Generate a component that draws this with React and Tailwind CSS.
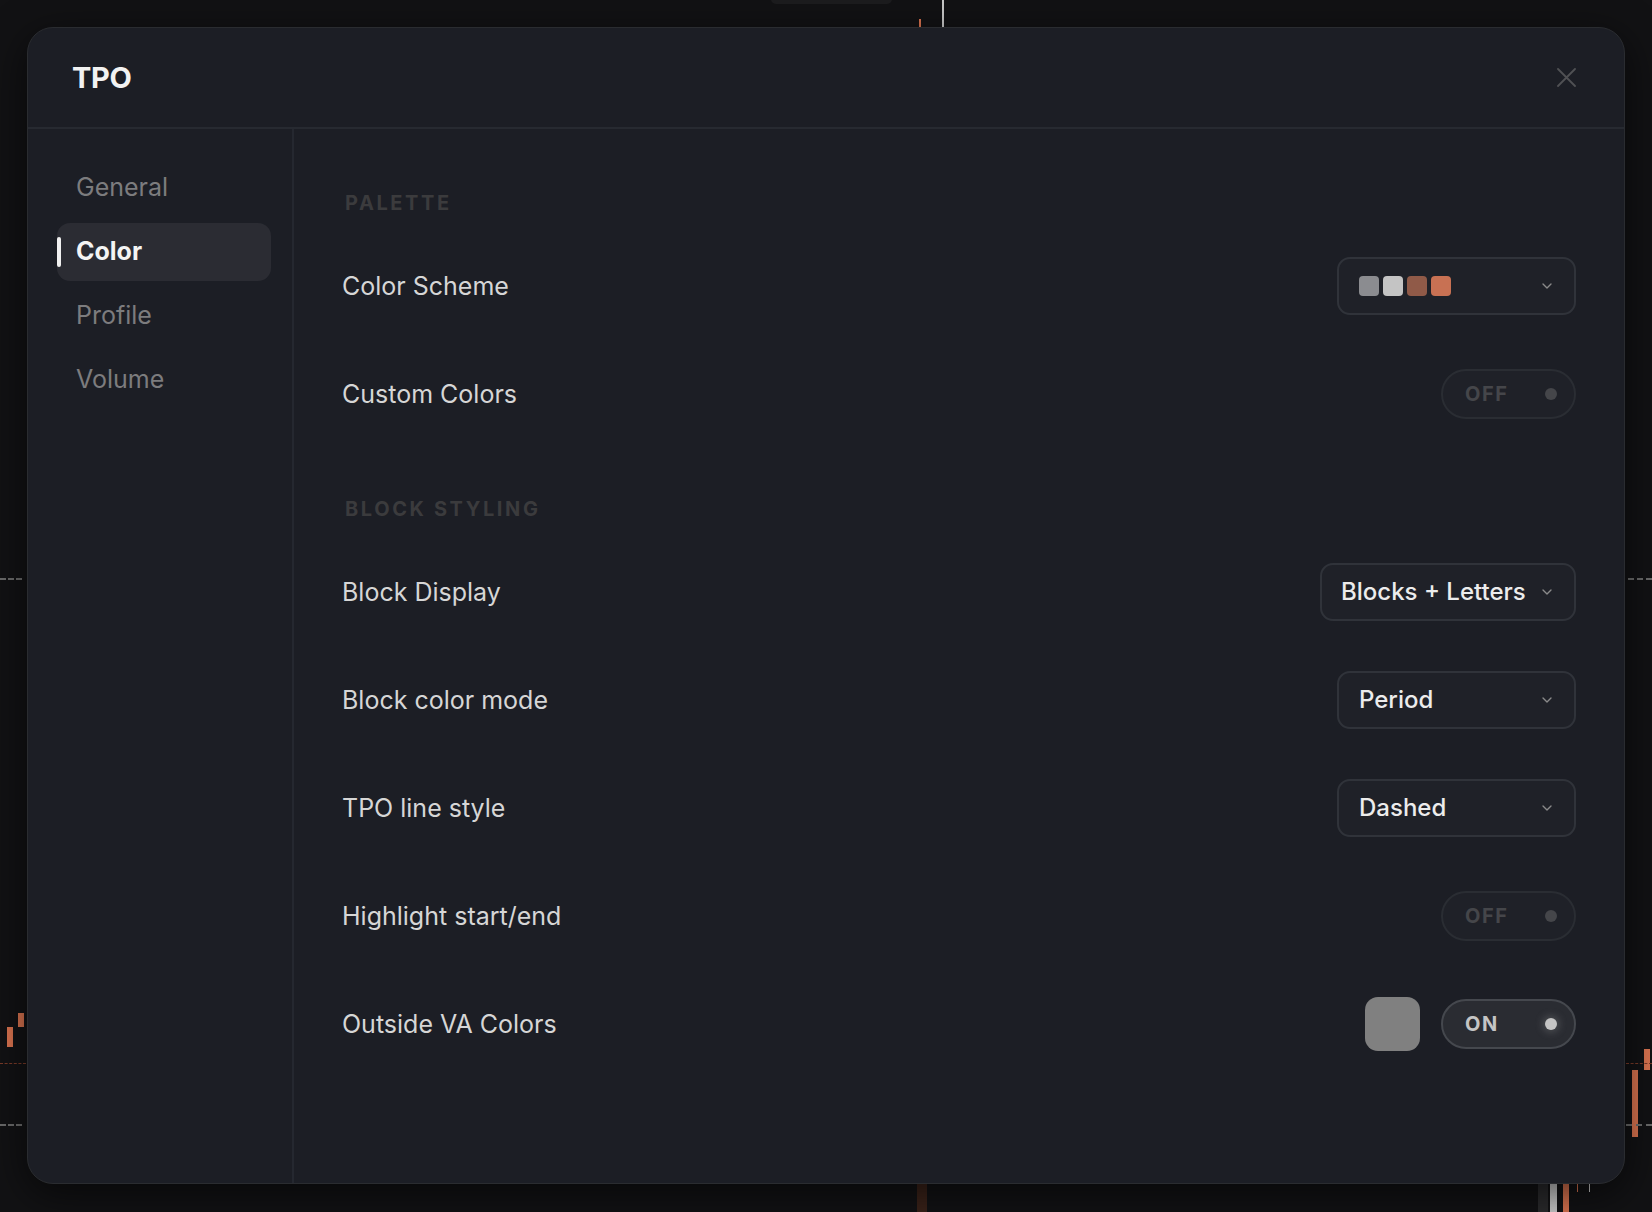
import { ChevronDown } from 'lucide-react';

const navItems = ['General', 'Color', 'Profile', 'Volume'];

function Select({ children, wide }) {
    return (
        <div className={`flex items-center justify-between h-[58px] rounded-[13px] border-2 border-[#30333a] bg-[#1f2128] pr-[19px] ${wide ? 'w-[256px] pl-[19px]' : 'w-[239px] pl-[20px]'}`}>
            <div className="flex items-center text-[24px] font-medium text-[#ececec] leading-none">{children}</div>
            <ChevronDown size={16} strokeWidth={2} className="text-[#8a8a8a]" />
        </div>
    );
}

function Toggle({ on }) {
    return (
        <div className={`flex items-center justify-between w-[135px] h-[50px] rounded-full border-2 pl-[22px] pr-[17px] ${on ? 'border-[#45484e] bg-[#2a2c32]' : 'border-[#2a2d33] bg-[#1f2128]'}`}>
            <span className={`text-[20px] font-bold tracking-[0.08em] leading-none ${on ? 'text-[#c4c4c4]' : 'text-[#45464a]'}`}>{on ? 'ON' : 'OFF'}</span>
            <span className={`w-[12px] h-[12px] rounded-full ${on ? 'bg-[#c4c4c4] shadow-[0_0_8px_2px_rgba(196,196,196,0.25)]' : 'bg-[#45464a]'}`} />
        </div>
    );
}

function Row({ label, children }) {
    return (
        <div className="flex items-center justify-between h-[108px]">
            <span className="text-[25px] text-[#d6d6d6] leading-none">{label}</span>
            <div className="flex items-center gap-[21px]">{children}</div>
        </div>
    );
}

function Section({ title, children }) {
    return (
        <div className="flex flex-col">
            <h3 className="ml-[3px] h-[28px] flex items-center text-[20px] font-bold tracking-[0.13em] text-[#3b3b3d] mb-[15px]">{title}</h3>
            {children}
        </div>
    );
}

export default function App() {
    return (
        <div className="relative w-[1652px] h-[1212px] bg-[#121214] overflow-hidden" style={{ fontFamily: 'Inter, "Noto Sans", sans-serif' }}>
            {/* chart remnants behind the dialog */}
            <div className="absolute left-[771px] top-[-6px] w-[121px] h-[10px] rounded-md bg-[#1c1c1e]" />
            <div className="absolute left-[919px] top-[19px] w-[2px] h-[8px] bg-[#d9734f]" />
            <div className="absolute left-[942px] top-0 w-[2px] h-[27px] bg-[#c8c8c8]" />
            <div className="absolute left-0 top-[578px] w-[22px] border-t-2 border-dashed border-[#6a6a6a]" />
            <div className="absolute left-[1628px] top-[578px] w-[24px] border-t-2 border-dashed border-[#6a6a6a]" />
            <div className="absolute left-[7px] top-[1027px] w-[6px] h-[20px] bg-[#d9734f]" />
            <div className="absolute left-[18px] top-[1013px] w-[6px] h-[14px] bg-[#d9734f]" />
            <div className="absolute left-0 top-[1063px] w-[26px] border-t border-dashed border-[#7a3a28]" />
            <div className="absolute left-0 top-[1124px] w-[22px] border-t-2 border-dashed border-[#6a6a6a]" />
            <div className="absolute left-[1644px] top-[1049px] w-[6px] h-[21px] bg-[#d9734f]" />
            <div className="absolute left-[1632px] top-[1070px] w-[6px] h-[67px] bg-[#d9734f]" />
            <div className="absolute left-[1626px] top-[1063px] w-[26px] border-t border-dashed border-[#7a3a28]" />
            <div className="absolute left-[1626px] top-[1124px] w-[26px] border-t-2 border-dashed border-[#6a6a6a]" />
            <div className="absolute left-[917px] top-[1180px] w-[10px] h-[32px] bg-[#3a2219]" />
            <div className="absolute left-[1538px] top-[1180px] w-[10px] h-[32px] bg-[#2a2a2c]" />
            <div className="absolute left-[1550px] top-[1180px] w-[7px] h-[32px] bg-[#c8c8c8]" />
            <div className="absolute left-[1563px] top-[1180px] w-[6px] h-[32px] bg-[#d9734f]" />
            <div className="absolute left-[1577px] top-[1180px] w-[1px] h-[12px] bg-[#d9734f]" />
            <div className="absolute left-[1589px] top-[1180px] w-[1px] h-[12px] bg-[#c8c8c8]" />

            <div className="relative flex flex-col h-full pt-[27px] pb-[28px] px-[27px]">
                <div className="flex-1 flex flex-col rounded-[26px] border border-[#2a2c30] bg-[#1c1e25] shadow-[0_10px_40px_rgba(0,0,0,0.6)] overflow-hidden">
                    {/* header */}
                    <div className="flex items-center justify-between h-[101px] border-b-2 border-[#272a31] pl-[44px] pr-[48px] shrink-0">
                        <h1 className="text-[29px] font-bold text-[#f2f2f2] tracking-[-0.01em]">TPO</h1>
                        <svg width="19" height="19" viewBox="0 0 19 19" fill="none" stroke="#505154" strokeWidth="1.8" strokeLinecap="round">
                            <path d="M1 1L18 18M18 1L1 18" />
                        </svg>
                    </div>

                    <div className="flex-1 flex">
                        {/* sidebar */}
                        <nav className="w-[266px] shrink-0 border-r-2 border-[#252830] pt-[30px] pl-[29px] pr-[21px] flex flex-col gap-[6px]">
                            {navItems.map(item => {
                                const active = item === 'Color';
                                return (
                                    <div
                                        key={item}
                                        className={`relative flex items-center h-[58px] rounded-[13px] pl-[19px] text-[25px] ${active ? 'bg-[#2b2c33] font-bold text-[#f4f4f4]' : 'text-[#7c7c7e]'}`}
                                    >
                                        {active && <span className="absolute left-0 top-[14px] w-[4px] h-[30px] rounded-full bg-[#f0f0f0]" />}
                                        {item}
                                    </div>
                                );
                            })}
                        </nav>

                        {/* content */}
                        <div className="flex-1 pt-[60px] pl-[48px] pr-[48px] flex flex-col gap-[47px]">
                            <Section title="PALETTE">
                                <Row label="Color Scheme">
                                    <Select>
                                        <div className="flex gap-[4px]">
                                            <span className="w-[20px] h-[20px] rounded-[4px] bg-[#8b8c90]" />
                                            <span className="w-[20px] h-[20px] rounded-[4px] bg-[#c4c4c4]" />
                                            <span className="w-[20px] h-[20px] rounded-[4px] bg-[#905a48]" />
                                            <span className="w-[20px] h-[20px] rounded-[4px] bg-[#c87153]" />
                                        </div>
                                    </Select>
                                </Row>
                                <Row label="Custom Colors">
                                    <Toggle />
                                </Row>
                            </Section>

                            <Section title="BLOCK STYLING">
                                <Row label="Block Display">
                                    <Select wide>Blocks + Letters</Select>
                                </Row>
                                <Row label="Block color mode">
                                    <Select>Period</Select>
                                </Row>
                                <Row label="TPO line style">
                                    <Select>Dashed</Select>
                                </Row>
                                <Row label="Highlight start/end">
                                    <Toggle />
                                </Row>
                                <Row label="Outside VA Colors">
                                    <span className="w-[55px] h-[54px] rounded-[13px] bg-[#808080]" />
                                    <Toggle on />
                                </Row>
                            </Section>
                        </div>
                    </div>
                </div>
            </div>
        </div>
    );
}
